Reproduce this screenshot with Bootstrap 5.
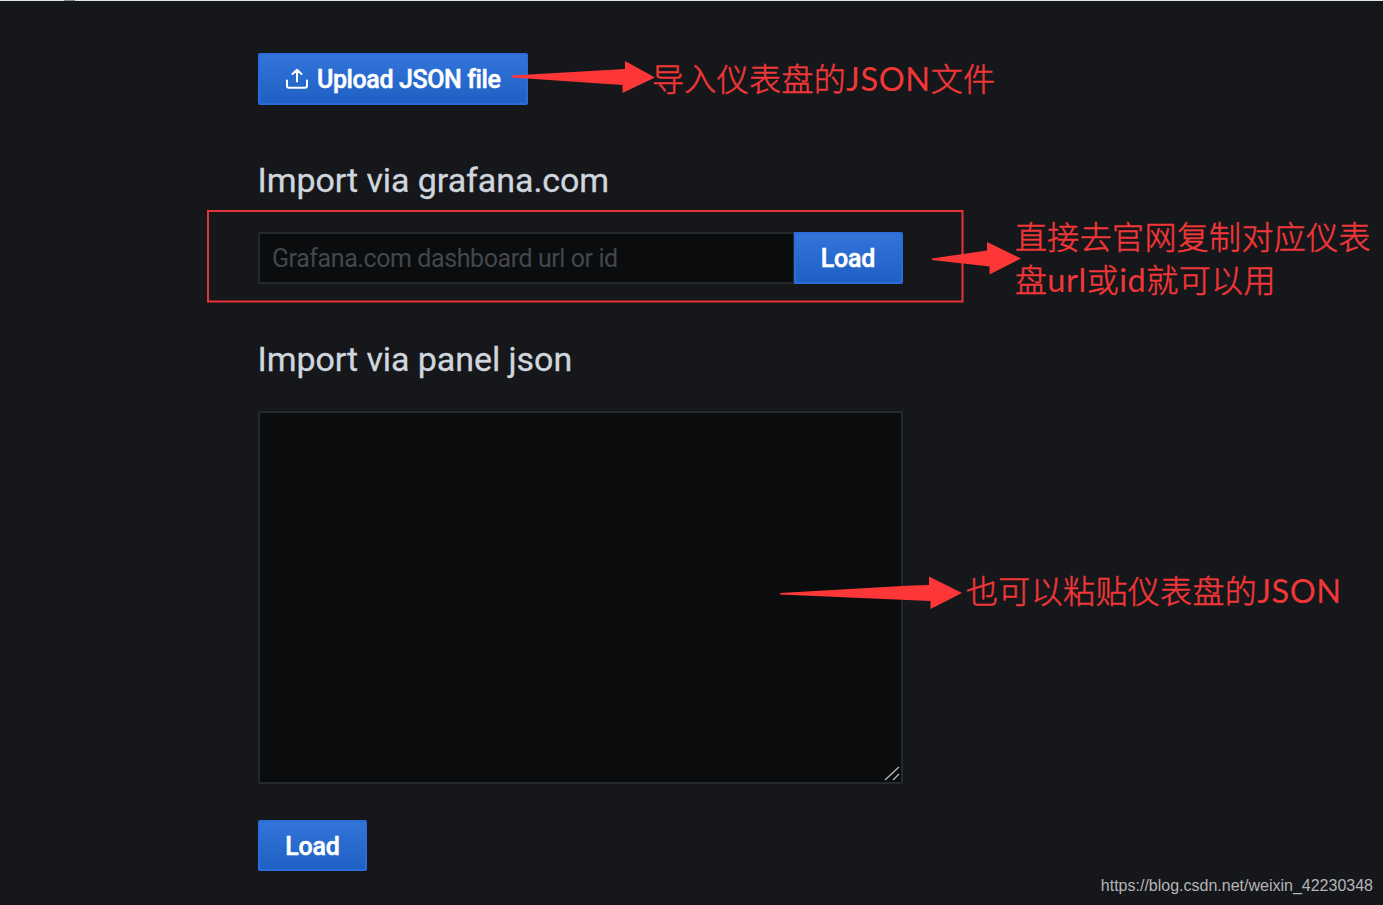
<!DOCTYPE html>
<html lang="en">
<head>
<meta charset="utf-8">
<meta name="viewport" content="width=device-width, initial-scale=1">
<title>Import dashboard</title>
<link href="https://cdn.jsdelivr.net/npm/bootstrap@5.3.0/dist/css/bootstrap.min.css" rel="stylesheet">
<style>
  body { background: #16171b; color: #d0d6dd; font-family: Roboto, sans-serif; height: 905px; overflow: hidden; }
  .top-edge { height: 1px; background: linear-gradient(90deg, #dfe5e3 64px, #8a8d8c 64px 75px, #dfe5e3 75px); }
  .import-form { width: 644.5px; margin-left: 258px; padding-top: 52px; }
  .btn-import { --bs-btn-color: #fff; --bs-btn-hover-color: #fff; --bs-btn-border-radius: 2px;
    border: 2px solid #2b6cd8; background: linear-gradient(#3274d9, #1f60c4); font-size: 25px; font-weight: 500; line-height: 30px; letter-spacing: -.2px; height: 52px; padding: 1px 25px 0; -webkit-text-stroke: .5px #fff; }
  .upload { width: 270px; letter-spacing: -.4px; }
  .upload svg { margin: -2px 8px 0 0; }
  .load { width: 109px; }
  .load-json { height: 51px; margin-top: 36px; padding-top: 2px; }
  .form-title { font-size: 34px; font-weight: 400; line-height: 40px; letter-spacing: -.07px; margin: 55px 0 32px -.5px; white-space: nowrap; -webkit-text-stroke: .3px; }
  .form-control.field, .form-control.field:focus { background: #0b0c0e; border: 2px solid #25282c; border-radius: 2px; color: #c7d0d9; font-size: 25px; line-height: 30px; letter-spacing: -.42px; padding: 0 12px; box-shadow: none; }
  .field::placeholder { color: #42474d; opacity: 1; }
  .form-control.url-field { height: 52px; }
  .form-control.json-field { height: 373px; resize: none; }
  .grip { right: 3px; bottom: 3px; }
  .notes { inset: 0; pointer-events: none; }
  .note { color: #f23738; font-family: Lato, sans-serif; font-size: 32.5px; line-height: 43px; white-space: nowrap; letter-spacing: .6px; }
  .han { font-family: "Noto Sans CJK SC", sans-serif; font-size: 32px; line-height: 1; font-weight: 300; letter-spacing: .35px; -webkit-text-stroke: .5px; }
  .watermark { right: 10px; bottom: 8px; font: 16px/22px "Liberation Sans", sans-serif; color: #b4b5b7; }
</style>
</head>
<body class="position-relative">
<div class="top-edge"></div>
<main class="import-form d-flex flex-column align-items-start">
  <button class="btn btn-import upload d-flex align-items-center" type="button">
    <svg class="flex-shrink-0" width="24" height="24" viewBox="0 0 24 24" fill="none" stroke="#fff" stroke-width="2" stroke-linecap="round" stroke-linejoin="round"><path d="M2 13.500v5.200a2 2 0 0 0 2 2h16a2 2 0 0 0 2-2V13.500M12 14.500V3M7.500 7 12 2.800 16.500 7"/></svg>
    <span class="text-nowrap">Upload JSON file</span>
  </button>
  <h2 class="form-title">Import via grafana.com</h2>
  <div class="input-group flex-nowrap">
    <input class="form-control field url-field" type="text" placeholder="Grafana.com dashboard url or id" aria-label="Dashboard url or id">
    <button class="btn btn-import load flex-shrink-0" type="button">Load</button>
  </div>
  <h2 class="form-title">Import via panel json</h2>
  <div class="position-relative w-100">
    <textarea class="form-control field json-field" aria-label="Panel json"></textarea>
    <svg class="grip position-absolute" width="16" height="15" viewBox="0 0 16 15" stroke="#b5b5b5" stroke-width="1.400"><path d="M1 14 15 1M9 14l6-6"/></svg>
  </div>
  <button class="btn btn-import load load-json" type="button">Load</button>
</main>

<div class="notes position-absolute">
  <svg class="position-absolute top-0 start-0" width="1383" height="905" fill="#fd3737">
    <rect x="208" y="211" width="754.500" height="90.500" fill="none" stroke="#e63335" stroke-width="2"/>
    <path d="M512 75.500 625 69V61L655 77.500 622.500 93V85L512 77.500Z"/>
    <path d="M932 258.500 987 250.500V242L1021 258.500 989.500 274.500V266.500L932 260Z"/>
    <path d="M780 593 911 585.500 929 585V576.500L962 593 930.500 609V601L780 594.500Z"/>
  </svg>
  <div class="note position-absolute" style="left:652px;top:57px"><span class="han">导入仪表盘的</span>JSON<span class="han">文件</span></div>
  <div class="note position-absolute" style="left:1015px;top:215px"><span class="han">直接去官网复制对应仪表</span><br><span class="han">盘</span>url<span class="han">或</span>id<span class="han">就可以用</span></div>
  <div class="note position-absolute" style="left:966px;top:569px"><span class="han">也可以粘贴仪表盘的</span>JSON</div>
  <div class="watermark position-absolute">https://blog.csdn.net/weixin_42230348</div>
</div>
<script src="https://cdn.jsdelivr.net/npm/bootstrap@5.3.0/dist/js/bootstrap.bundle.min.js"></script>
</body>
</html>
